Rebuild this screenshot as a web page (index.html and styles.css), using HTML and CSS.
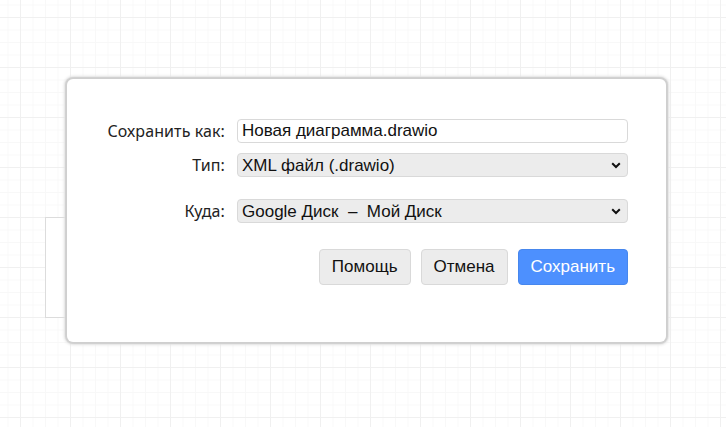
FILE: index.html
```html
<!DOCTYPE html>
<html lang="ru">
<head>
<meta charset="utf-8">
<title>Сохранить как</title>
<link rel="stylesheet" href="styles.css">
</head>
<body>
<div class="canvas">
  <div class="shape"></div>
  <div class="dialog">
    <div class="form">
      <label class="label" for="name">Сохранить как:</label>
      <input class="field" id="name" type="text" value="Новая диаграмма.drawio">
      <label class="label" for="type">Тип:</label>
      <div class="select-wrap">
        <select class="select" id="type"><option>XML файл (.drawio)</option></select>
        <svg class="chev" width="10" height="7" viewBox="0 0 10 7"><path d="M1.2 1.2 L5 5 L8.8 1.2" fill="none" stroke="#111" stroke-width="2"/></svg>
      </div>
      <label class="label label-where" for="where">Куда:</label>
      <div class="select-wrap where">
        <select class="select" id="where"><option>Google Диск&nbsp; –&nbsp; Мой Диск</option></select>
        <svg class="chev" width="10" height="7" viewBox="0 0 10 7"><path d="M1.2 1.2 L5 5 L8.8 1.2" fill="none" stroke="#111" stroke-width="2"/></svg>
      </div>
    </div>
    <div class="buttons">
      <button class="btn">Помощь</button>
      <button class="btn">Отмена</button>
      <button class="btn primary">Сохранить</button>
    </div>
  </div>
</div>
</body>
</html>
```
FILE: styles.css
```css
html, body {
  margin: 0;
  padding: 0;
  width: 726px;
  height: 427px;
  overflow: hidden;
}
body {
  background-color: #ffffff;
  background-image:
    linear-gradient(to right, #f0f0f0 1px, transparent 1px),
    linear-gradient(to bottom, #f0f0f0 1px, transparent 1px),
    linear-gradient(to right, #f8f8f8 1px, transparent 1px),
    linear-gradient(to bottom, #f8f8f8 1px, transparent 1px);
  background-size: 50px 50px, 50px 50px, 12.5px 12.5px, 12.5px 12.5px;
  background-position: 20px 17px, 20px 17px, 7.5px 4.5px, 7.5px 4.5px;
  font-family: "Liberation Sans", Arial, sans-serif;
}
.canvas {
  position: relative;
  width: 726px;
  height: 427px;
}
.shape {
  position: absolute;
  left: 45px;
  top: 217px;
  width: 60px;
  height: 99px;
  border: 1px solid #dcdcdc;
  background: #fff;
}
.dialog {
  position: absolute;
  left: 67px;
  top: 79px;
  width: 599px;
  height: 263px;
  box-sizing: border-box;
  background: #fff;
  border-radius: 6px;
  box-shadow: 0 0 1px 2px #cfcfcf, 0 0 3px 3px #e2e2e2;
  padding: 40px 38px 0 0;
}
.form {
  display: grid;
  grid-template-columns: 158px 391px;
  column-gap: 12px;
  row-gap: 10px;
  align-items: center;
}
.label {
  justify-self: end;
  font-family: "Noto Sans", "Open Sans", sans-serif;
  font-size: 16px;
  letter-spacing: 0.1px;
  color: #222;
  white-space: nowrap;
}
.label-where, .where {
  margin-top: 12px;
}
.field, .select {
  box-sizing: border-box;
  width: 391px;
  height: 24px;
  margin: 0;
  padding: 0 4px;
  font-family: "Liberation Sans", Arial, sans-serif;
  font-size: 17px;
  color: #111;
  border-radius: 4px;
}
.field {
  border: 1px solid #d9d9d9;
  background: #fff;
  outline: none;
}
.select-wrap {
  position: relative;
  height: 24px;
}
.select {
  -webkit-appearance: none;
  appearance: none;
  border: 1px solid #d9d9d9;
  background: #ececec;
}
.chev {
  position: absolute;
  right: 7px;
  top: 9px;
  pointer-events: none;
}
.buttons {
  display: flex;
  justify-content: flex-end;
  gap: 10px;
  margin-top: 26px;
}
.btn {
  box-sizing: border-box;
  height: 36px;
  padding: 0 12px;
  border: 1px solid #d9d9d9;
  border-radius: 4px;
  background: #ececec;
  color: #111;
  font-family: "Liberation Sans", Arial, sans-serif;
  font-size: 17px;
}
.btn.primary {
  background: #4d90fe;
  border-color: #4787ed;
  color: #fff;
}
```
